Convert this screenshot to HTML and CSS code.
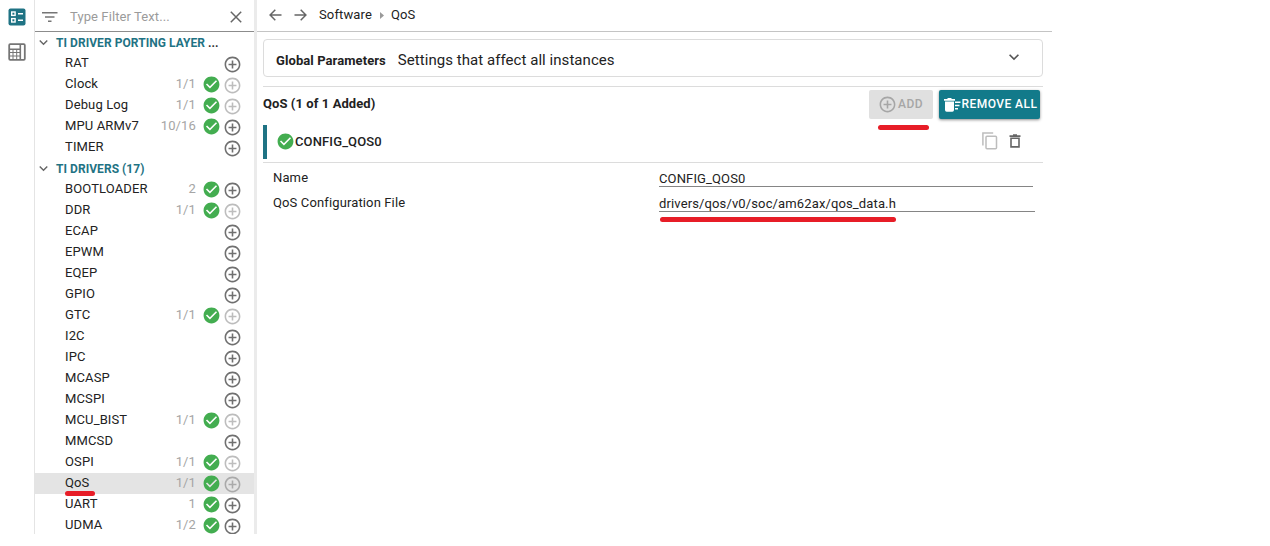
FILE: index.html
```html
<!DOCTYPE html>
<html lang="en">
<head>
<meta charset="utf-8">
<title>QoS</title>
<link rel="stylesheet" href="styles.css">
</head>
<body>
<svg class="defs" aria-hidden="true">
  <symbol id="plus" viewBox="0 0 24 24"><path fill="currentColor" d="M13 7h-2v4H7v2h4v4h2v-4h4v-2h-4V7zm-1-5C6.48 2 2 6.48 2 12s4.48 10 10 10 10-4.48 10-10S17.52 2 12 2zm0 18c-4.41 0-8-3.59-8-8s3.59-8 8-8 8 3.59 8 8-3.59 8-8 8z"/></symbol>
  <symbol id="check" viewBox="0 0 24 24"><path fill="currentColor" d="M12 2C6.48 2 2 6.48 2 12s4.48 10 10 10 10-4.48 10-10S17.52 2 12 2zm-2 15l-5-5 1.41-1.41L10 14.17l7.59-7.59L19 8l-9 9z"/></symbol>
  <symbol id="chevron" viewBox="0 0 24 24"><path fill="currentColor" d="M7.41 8.59L12 13.17l4.59-4.58L18 10l-6 6-6-6 1.41-1.41z"/></symbol>
</svg>
<div class="app">
  <nav class="rail">
    <svg class="rail-icon active" viewBox="0 0 18 18"><rect x="0.5" y="0.5" width="17" height="17" rx="2" fill="#1f7384"/><g fill="none" stroke="#fff" stroke-width="1.4"><rect x="3.7" y="4" width="3.4" height="3.4"/><rect x="3.7" y="10.6" width="3.4" height="3.4"/><path d="M10 5.7h5M10 12.3h5"/></g></svg>
    <svg class="rail-icon" viewBox="0 0 18 18"><g fill="none" stroke="#757575"><rect x="1.2" y="1.2" width="15.6" height="15.6" rx="1" stroke-width="1.8"/><path stroke-width="1.6" d="M1 6.2h11.3M12.3 1v16"/><path stroke-width="1" d="M1 9.5h11M1 13h11M5 6v11M8.7 6v11"/></g></svg>
  </nav>
  <aside class="tree">
    <div class="filter">
      <svg class="filter-icon" viewBox="0 0 16 12"><path d="M0 1.7h15.5M3 6h9.5M6 10.3h3.5" stroke="#757575" stroke-width="1.6"/></svg>
      <span class="placeholder">Type Filter Text...</span>
      <svg class="clear" viewBox="0 0 12 12"><path d="M.8.8l10.4 10.4M11.2.8L.8 11.2" stroke="#666" stroke-width="1.5"/></svg>
    </div>
    <div class="group"><svg><use href="#chevron"/></svg>TI DRIVER PORTING LAYER <span class="dots">...</span></div>
    <div class="row"><span>RAT</span><svg class="add"><use href="#plus"/></svg></div>
    <div class="row"><span>Clock</span><i>1/1</i><svg class="ok"><use href="#check"/></svg><svg class="add off"><use href="#plus"/></svg></div>
    <div class="row"><span>Debug Log</span><i>1/1</i><svg class="ok"><use href="#check"/></svg><svg class="add off"><use href="#plus"/></svg></div>
    <div class="row"><span>MPU ARMv7</span><i>10/16</i><svg class="ok"><use href="#check"/></svg><svg class="add"><use href="#plus"/></svg></div>
    <div class="row"><span>TIMER</span><svg class="add"><use href="#plus"/></svg></div>
    <div class="group"><svg><use href="#chevron"/></svg>TI DRIVERS (17)</div>
    <div class="row"><span>BOOTLOADER</span><i>2</i><svg class="ok"><use href="#check"/></svg><svg class="add"><use href="#plus"/></svg></div>
    <div class="row"><span>DDR</span><i>1/1</i><svg class="ok"><use href="#check"/></svg><svg class="add off"><use href="#plus"/></svg></div>
    <div class="row"><span>ECAP</span><svg class="add"><use href="#plus"/></svg></div>
    <div class="row"><span>EPWM</span><svg class="add"><use href="#plus"/></svg></div>
    <div class="row"><span>EQEP</span><svg class="add"><use href="#plus"/></svg></div>
    <div class="row"><span>GPIO</span><svg class="add"><use href="#plus"/></svg></div>
    <div class="row"><span>GTC</span><i>1/1</i><svg class="ok"><use href="#check"/></svg><svg class="add off"><use href="#plus"/></svg></div>
    <div class="row"><span>I2C</span><svg class="add"><use href="#plus"/></svg></div>
    <div class="row"><span>IPC</span><svg class="add"><use href="#plus"/></svg></div>
    <div class="row"><span>MCASP</span><svg class="add"><use href="#plus"/></svg></div>
    <div class="row"><span>MCSPI</span><svg class="add"><use href="#plus"/></svg></div>
    <div class="row"><span>MCU_BIST</span><i>1/1</i><svg class="ok"><use href="#check"/></svg><svg class="add off"><use href="#plus"/></svg></div>
    <div class="row"><span>MMCSD</span><svg class="add"><use href="#plus"/></svg></div>
    <div class="row"><span>OSPI</span><i>1/1</i><svg class="ok"><use href="#check"/></svg><svg class="add off"><use href="#plus"/></svg></div>
    <div class="row selected"><span>QoS</span><i>1/1</i><svg class="ok"><use href="#check"/></svg><svg class="add off"><use href="#plus"/></svg><b class="mark mark-row"></b></div>
    <div class="row"><span>UART</span><i>1</i><svg class="ok"><use href="#check"/></svg><svg class="add"><use href="#plus"/></svg></div>
    <div class="row"><span>UDMA</span><i>1/2</i><svg class="ok"><use href="#check"/></svg><svg class="add"><use href="#plus"/></svg></div>
  </aside>
  <main class="main">
    <header class="crumbs">
      <svg class="arrow" viewBox="0 0 13 12"><path d="M12.5 6H1.2M6.3.8L1.1 6l5.2 5.2" fill="none" stroke="#666" stroke-width="1.5"/></svg>
      <svg class="arrow next" viewBox="0 0 13 12"><path d="M.5 6h11.3M6.7.8L11.9 6l-5.2 5.2" fill="none" stroke="#666" stroke-width="1.5"/></svg>
      <span>Software</span>
      <svg class="sep" viewBox="0 0 4 7"><path d="M0 0l4 3.5L0 7z" fill="#9a9a9a"/></svg>
      <span>QoS</span>
    </header>
    <div class="content">
      <section class="global">
        <strong>Global Parameters</strong><span>Settings that affect all instances</span>
        <svg><use href="#chevron"/></svg>
      </section>
      <section class="toolbar">
        <h2>QoS (1 of 1 Added)</h2>
        <div class="btn disabled"><svg class="btn-plus"><use href="#plus"/></svg><span>ADD</span><b class="mark mark-add"></b></div>
        <div class="btn primary"><svg class="btn-trash" viewBox="0 0 17 14"><path fill="#fff" d="M0 1h3l1-1h3l1 1h3v1.7H0zM1 3.5h9V12a1.7 1.7 0 0 1-1.7 1.7H2.7A1.7 1.7 0 0 1 1 12zM11 3.5h5.5V5H11zM11 6.7h4.5v1.5H11zM11 10h3v1.5h-3z"/></svg><span>REMOVE ALL</span></div>
      </section>
      <section class="instance">
        <svg class="ok"><use href="#check"/></svg><span>CONFIG_QOS0</span>
        <svg class="copy" viewBox="0 0 16 18"><g fill="none" stroke="#bdbdbd" stroke-width="1.5"><path d="M.9 13.5V1h10.3"/><rect x="4" y="4.2" width="10.5" height="12.6" rx="1"/></g></svg>
        <svg class="trash" viewBox="0 0 12 14"><path d="M.5 2.1h11M4 1h4" stroke="#666" stroke-width="1.6"/><path d="M2 4.3h8v8.6H2z" fill="none" stroke="#666" stroke-width="1.6"/></svg>
      </section>
      <div class="field"><label>Name</label><div class="value">CONFIG_QOS0</div></div>
      <div class="field"><label>QoS Configuration File</label><div class="value wide">drivers/qos/v0/soc/am62ax/qos_data.h<b class="mark mark-file"></b></div></div>
    </div>
  </main>
</div>
</body>
</html>
```

FILE: styles.css
```css
* { box-sizing: border-box; }
body { margin: 0; background: #fff; color: #222; font: 13px/21px Roboto, sans-serif; letter-spacing: .13px; }
svg { display: block; flex: none; }
.defs { position: absolute; width: 0; height: 0; }
.app { display: flex; width: 1052px; height: 534px; overflow: hidden; }
.rail { width: 34px; padding: 8px 0 0 7.5px; display: flex; flex-direction: column; gap: 17px; }
.rail-icon { width: 18px; height: 18px; }
.tree { width: 223px; border-left: 1px solid #e4e4e4; border-right: 3px solid #ebebeb; }
.filter { height: 32px; border-bottom: 1px solid #8c8c8c; display: flex; align-items: center; padding: 2px 12px 0 7px; }
.filter-icon { width: 16px; height: 12px; }
.placeholder { margin-left: 12px; flex: 1; color: #9b9b9b; letter-spacing: .1px; }
.clear { width: 12px; height: 12px; }
.group { height: 21px; display: flex; align-items: center; padding-top: 2px; font-weight: 700; font-size: 12px; letter-spacing: .05px; color: #1f7384; white-space: pre; }
.group svg { width: 17px; height: 17px; margin: -2px 4px 0 0; color: #666; }
.dots { color: #333; }
.row { position: relative; height: 21px; display: flex; align-items: center; padding: 0 12px 0 30px; }
.row span { flex: 1; line-height: 19px; height: 21px; }
.row i { font-style: normal; color: #a5a5a5; line-height: 19px; height: 21px; margin-right: 6px; }
.ok { width: 19px; height: 19px; color: #43ad50; }
.add { width: 19px; height: 19px; margin: 1px 0 0 2px; color: #707070; }
.off { color: #bdbdbd; }
.selected { background: #e4e4e4; }
.selected .off { color: #aaa; }
.mark { position: absolute; height: 5px; border-radius: 2.5px; background: #e71d27; }
.mark-row { left: 30px; top: 18px; width: 30px; z-index: 1; }
.main { flex: 1; }
.crumbs { height: 32px; border-bottom: 1px solid #c4c4c4; display: flex; align-items: center; padding: 0 0 2px 12px; }
.arrow { width: 13px; height: 12px; margin-top: 1px; }
.next { margin: 1px 12px 0; }
.sep { width: 4px; height: 7px; margin: 1px 7px 0 8px; }
.content { padding: 7px 9px 0 6px; }
.global { height: 38px; border: 1px solid #dcdcdc; border-radius: 4px; display: flex; align-items: center; padding: 4px 18px 0 12px; }
.global span { flex: 1; margin-left: 12px; font-size: 15px; letter-spacing: .05px; }
.global strong { padding-top: 1px; letter-spacing: .08px; }
.global svg { width: 20px; height: 20px; margin-top: -6px; color: #555; }
.toolbar { margin-top: 9px; height: 36px; border-top: 1px solid #dcdcdc; display: flex; align-items: flex-start; padding: 3px 3px 0 0; }
.toolbar h2 { flex: 1; margin: 3px 0 0; font-size: 13px; line-height: 21px; font-weight: 700; letter-spacing: .08px; }
.btn { position: relative; height: 29px; display: flex; align-items: center; border-radius: 2px; font-weight: 500; font-size: 12px; letter-spacing: .45px; white-space: nowrap; }
.btn span { margin-top: -1px; }
.disabled { width: 64px; background: #e0e0e0; color: #a6a6a6; padding-left: 9px; margin-right: 6px; }
.btn-plus { width: 19px; height: 19px; margin-right: 1px; }
.primary { width: 101px; background: #127a8a; color: #fff; padding-left: 4.5px; box-shadow: 0 1px 3px rgba(0,0,0,.45); }
.btn-trash { width: 17px; height: 14px; margin: 1px 1px 0 0; }
.mark-add { left: 9px; top: 35px; width: 51px; }
.instance { height: 34px; margin-top: 3px; border-left: 4px solid #1f7384; display: flex; align-items: center; padding: 0 22px 2px 9px; font-weight: 500; }
.instance .ok { width: 19px; height: 19px; }
.instance span { flex: 1; }
.copy { width: 16px; height: 18px; margin-right: 11px; }
.trash { width: 12px; height: 14px; }
.field { display: flex; height: 25px; padding: 1px 0 0 10px; }
.instance + .field { margin-top: 3px; padding-top: 4px; height: 28.5px; border-top: 1px solid #dcdcdc; }
.instance + .field { height: 29px; }
.field label { width: 386px; }
.value { position: relative; width: 374px; height: 20px; line-height: 23px; border-bottom: 1px solid #858585; }
.wide { width: 376px; }
.mark-file { left: 1px; top: 25px; width: 236px; }
```
